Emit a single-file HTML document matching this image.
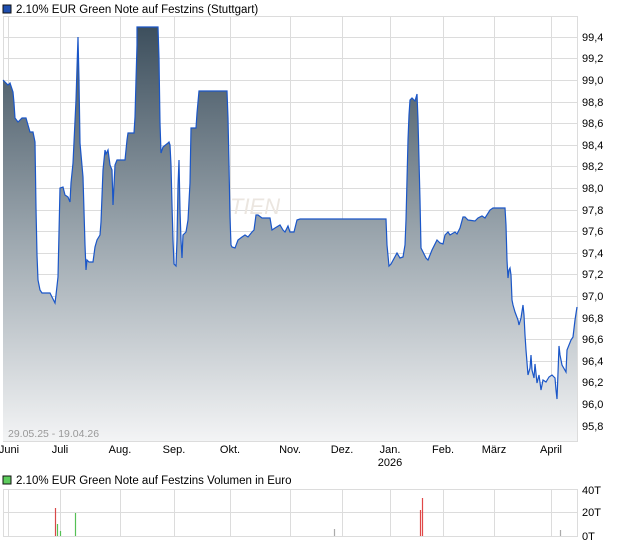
<!DOCTYPE html><html><head><meta charset="utf-8"><style>
body{margin:0;width:620px;height:546px;background:#fff;overflow:hidden;font-family:"Liberation Sans",sans-serif}
svg{position:absolute;left:0;top:0}
</style></head><body>
<svg width="620" height="546" xmlns="http://www.w3.org/2000/svg" font-family="Liberation Sans, sans-serif">
<defs><linearGradient id="g" gradientUnits="userSpaceOnUse" x1="0" y1="27" x2="0" y2="441"><stop offset="0" stop-color="#3d4f5d"/><stop offset="0.5" stop-color="#9aa5ad"/><stop offset="1" stop-color="#f3f4f5"/></linearGradient></defs>
<rect x="3" y="5" width="8" height="8" fill="#1f4fb0" stroke="#111" stroke-width="1"/>
<text x="16" y="13" font-size="11.5" fill="#000">2.10% EUR Green Note auf Festzins (Stuttgart)</text>
<g stroke="#dcdcdc" stroke-width="1">
<rect x="3.5" y="16.5" width="574" height="425" fill="none"/>
<path d="M3 37.5H578M3 58.5H578M3 80.5H578M3 102.5H578M3 123.5H578M3 145.5H578M3 166.5H578M3 188.5H578M3 210.5H578M3 231.5H578M3 253.5H578M3 274.5H578M3 296.5H578M3 318.5H578M3 339.5H578M3 361.5H578M3 382.5H578M3 404.5H578M3 426.5H578"/>
<path d="M8.5 16V441M60.5 16V441M120.5 16V441M174.5 16V441M230.5 16V441M290.5 16V441M342.5 16V441M390.5 16V441M443.5 16V441M494.5 16V441M551.5 16V441"/>
</g>
<text x="230" y="214" font-size="22" font-style="italic" fill="#ebe6e0">TIEN</text>
<path d="M3 441 L3 80 L8 85 L10 83 L13 92 L14 103 L15 118 L18 122 L22 118 L26 118 L28 125 L30 132 L33 132 L35 142 L36 208 L37 255 L38 280 L40 290 L42 293 L50 293 L52 297 L55 303 L56 295 L58 277 L60 188 L63 187 L65 195 L68 197 L70 202 L71 183 L73 163 L76 100 L77 68 L78 37 L79 80 L80 143 L83 177 L85 245 L86 270 L87 260 L89 262 L93 262 L95 247 L97 240 L100 235 L101 222 L103 170 L105 150 L106 154 L108 150 L110 165 L112 170 L113 205 L115 165 L117 160 L125 160 L127 140 L128 133 L134 133 L135 117 L136 80 L137 45 L137 27 L158 27 L159 58 L160 123 L161 153 L163 147 L168 143 L169 142 L170 145 L171 165 L172 205 L173 240 L174 264 L176 266 L177 240 L178 186 L179 160 L180 210 L181 240 L182 258 L183 235 L186 232 L188 220 L190 183 L191 128 L196 128 L197 113 L199 91 L227 91 L228 118 L229 165 L230 217 L231 245 L232 247 L235 248 L238 240 L242 237 L245 235 L248 237 L252 232 L254 230 L256 215 L258 215 L262 218 L270 218 L272 230 L275 228 L280 225 L283 230 L285 232 L288 226 L290 232 L294 232 L297 220 L300 219 L386 219 L387 245 L389 266 L391 264 L397 253 L400 258 L403 257 L405 245 L406 220 L408 140 L409 115 L410 100 L412 98 L415 101 L417 94 L418 120 L420 200 L421 248 L423 252 L426 258 L428 260 L432 250 L437 240 L440 243 L443 244 L445 235 L448 232 L450 235 L455 232 L457 234 L460 228 L463 217 L465 217 L468 220 L475 221 L478 218 L482 216 L485 218 L490 210 L493 208 L505 208 L506 225 L507 260 L508 278 L509 270 L510 268 L511 275 L512 300 L513 305 L515 312 L518 320 L519 325 L521 318 L523 305 L524 315 L525 335 L526 350 L528 375 L530 368 L531 355 L532 370 L534 378 L535 364 L537 383 L539 375 L541 390 L543 380 L546 382 L549 377 L552 375 L555 378 L556 390 L557 399 L558 373 L559 346 L560 355 L562 365 L566 372 L567 350 L569 345 L571 340 L573 337 L575 320 L577 307 L577 441 Z" fill="url(#g)"/>
<path d="M3 80 L8 85 L10 83 L13 92 L14 103 L15 118 L18 122 L22 118 L26 118 L28 125 L30 132 L33 132 L35 142 L36 208 L37 255 L38 280 L40 290 L42 293 L50 293 L52 297 L55 303 L56 295 L58 277 L60 188 L63 187 L65 195 L68 197 L70 202 L71 183 L73 163 L76 100 L77 68 L78 37 L79 80 L80 143 L83 177 L85 245 L86 270 L87 260 L89 262 L93 262 L95 247 L97 240 L100 235 L101 222 L103 170 L105 150 L106 154 L108 150 L110 165 L112 170 L113 205 L115 165 L117 160 L125 160 L127 140 L128 133 L134 133 L135 117 L136 80 L137 45 L137 27 L158 27 L159 58 L160 123 L161 153 L163 147 L168 143 L169 142 L170 145 L171 165 L172 205 L173 240 L174 264 L176 266 L177 240 L178 186 L179 160 L180 210 L181 240 L182 258 L183 235 L186 232 L188 220 L190 183 L191 128 L196 128 L197 113 L199 91 L227 91 L228 118 L229 165 L230 217 L231 245 L232 247 L235 248 L238 240 L242 237 L245 235 L248 237 L252 232 L254 230 L256 215 L258 215 L262 218 L270 218 L272 230 L275 228 L280 225 L283 230 L285 232 L288 226 L290 232 L294 232 L297 220 L300 219 L386 219 L387 245 L389 266 L391 264 L397 253 L400 258 L403 257 L405 245 L406 220 L408 140 L409 115 L410 100 L412 98 L415 101 L417 94 L418 120 L420 200 L421 248 L423 252 L426 258 L428 260 L432 250 L437 240 L440 243 L443 244 L445 235 L448 232 L450 235 L455 232 L457 234 L460 228 L463 217 L465 217 L468 220 L475 221 L478 218 L482 216 L485 218 L490 210 L493 208 L505 208 L506 225 L507 260 L508 278 L509 270 L510 268 L511 275 L512 300 L513 305 L515 312 L518 320 L519 325 L521 318 L523 305 L524 315 L525 335 L526 350 L528 375 L530 368 L531 355 L532 370 L534 378 L535 364 L537 383 L539 375 L541 390 L543 380 L546 382 L549 377 L552 375 L555 378 L556 390 L557 399 L558 373 L559 346 L560 355 L562 365 L566 372 L567 350 L569 345 L571 340 L573 337 L575 320 L577 307" fill="none" stroke="#1a56c8" stroke-width="1.2"/>
<text x="8" y="437" font-size="10.5" fill="#999">29.05.25 - 19.04.26</text>
<g font-size="11" fill="#000">
<text x="582" y="41">99,4</text><text x="582" y="62">99,2</text><text x="582" y="84">99,0</text><text x="582" y="106">98,8</text><text x="582" y="127">98,6</text><text x="582" y="149">98,4</text><text x="582" y="170">98,2</text><text x="582" y="192">98,0</text><text x="582" y="214">97,8</text><text x="582" y="235">97,6</text><text x="582" y="257">97,4</text><text x="582" y="278">97,2</text><text x="582" y="300">97,0</text><text x="582" y="322">96,8</text><text x="582" y="343">96,6</text><text x="582" y="365">96,4</text><text x="582" y="386">96,2</text><text x="582" y="408">96,0</text><text x="582" y="430">95,8</text>
</g>
<g font-size="11" fill="#000" text-anchor="middle">
<text x="9" y="453">Juni</text><text x="60" y="453">Juli</text><text x="120" y="453">Aug.</text><text x="174" y="453">Sep.</text><text x="230" y="453">Okt.</text><text x="290" y="453">Nov.</text><text x="342" y="453">Dez.</text><text x="390" y="453">Jan.</text><text x="390" y="466">2026</text><text x="443" y="453">Feb.</text><text x="494" y="453">März</text><text x="551" y="453">April</text>
</g>
<rect x="3" y="476" width="8" height="8" fill="#5ccc5c" stroke="#111" stroke-width="1"/>
<text x="16" y="484" font-size="11.5" fill="#000">2.10% EUR Green Note auf Festzins Volumen in Euro</text>
<g stroke="#dcdcdc" stroke-width="1">
<path d="M3 489.5H578M3 512.5H578M3 536.5H578M3.5 489V537M577.5 489V537"/>
<path d="M8.5 489V537M60.5 489V537M120.5 489V537M174.5 489V537M230.5 489V537M290.5 489V537M342.5 489V537M390.5 489V537M443.5 489V537M494.5 489V537M551.5 489V537"/>
</g>
<g stroke-width="1.2">
<path d="M55.5 508V536" stroke="#d84848"/><path d="M57.5 524V536M60.5 531V536M75.5 513V536" stroke="#55c055"/>
<path d="M420.5 510V536M422.5 498V536" stroke="#e04848"/>
<path d="M334.5 529V536M560.5 530V536" stroke="#aaa"/>
</g>
<g font-size="11" fill="#000"><text x="582" y="494">40T</text><text x="582" y="516">20T</text><text x="582" y="540">0T</text></g>
</svg>
</body></html>
